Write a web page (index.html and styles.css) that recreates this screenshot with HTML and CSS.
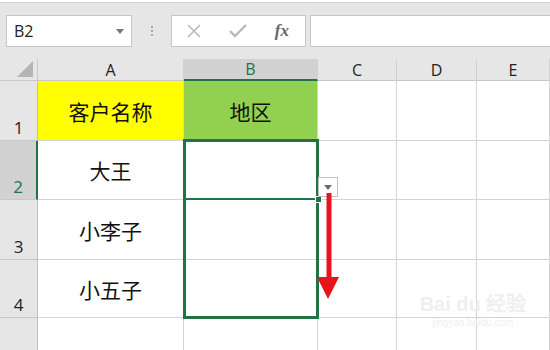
FILE: index.html
```html
<!DOCTYPE html>
<html lang="zh-CN">
<head>
  <meta charset="UTF-8" />
  <title>Excel 下拉填充</title>
  <link rel="stylesheet" href="styles.css">
</head>
<body>
  <div class="app">
    <div class="toolbar">
      <div class="namebox">
        <span>B2</span>
        <svg class="caret" width="8" height="5" viewBox="0 0 8 5"><path d="M0 0h8L4 5z" fill="#777"/></svg>
      </div>
      <div class="grip"><i></i><i></i><i></i></div>
      <div class="fbuttons">
        <svg width="16" height="16" viewBox="0 0 16 16"><path d="M2 2l12 12M14 2L2 14" stroke="#b9b9b9" stroke-width="1.6"/></svg>
        <svg width="18" height="16" viewBox="0 0 18 16"><path d="M1 8l5 5L17 2" stroke="#b9b9b9" stroke-width="2.4" fill="none"/></svg>
        <span class="fx">fx</span>
      </div>
      <div class="formula"></div>
    </div>

    <div class="sheet">
      <div class="corner"><svg width="16" height="16" viewBox="0 0 16 16"><path d="M16 0V16H0z" fill="#b4b4b4"/></svg></div>
      <div class="colhead">A</div>
      <div class="colhead active">B</div>
      <div class="colhead">C</div>
      <div class="colhead">D</div>
      <div class="colhead">E</div>

      <div class="rowhead">1</div>
      <div class="cell yellow">客户名称</div>
      <div class="cell green">地区</div>
      <div class="cell"></div>
      <div class="cell"></div>
      <div class="cell"></div>

      <div class="rowhead active">2</div>
      <div class="cell">大王</div>
      <div class="cell"></div>
      <div class="cell"></div>
      <div class="cell"></div>
      <div class="cell"></div>

      <div class="rowhead">3</div>
      <div class="cell">小李子</div>
      <div class="cell"></div>
      <div class="cell"></div>
      <div class="cell"></div>
      <div class="cell"></div>

      <div class="rowhead">4</div>
      <div class="cell">小五子</div>
      <div class="cell"></div>
      <div class="cell"></div>
      <div class="cell"></div>
      <div class="cell"></div>

      <div class="rowhead"></div>
      <div class="cell"></div>
      <div class="cell"></div>
      <div class="cell"></div>
      <div class="cell"></div>
      <div class="cell"></div>

      <div class="selection"></div>
      <div class="divider"></div>
      <div class="handle"></div>
      <div class="dropbtn"><svg width="8" height="5" viewBox="0 0 8 5"><path d="M0 0h8L4 5z" fill="#6d6d6d"/></svg></div>
      <svg class="arrow" width="24" height="110" viewBox="0 0 24 110"><path d="M10.5 0h5v84h-5z" fill="#e8141b"/><path d="M1 84h22l-11 22z" fill="#e8141b"/></svg>
      <div class="watermark">
        <div class="wm-logo">Bai du 经验</div>
        <div class="wm-url">jingyan.baidu.com</div>
      </div>
    </div>
  </div>
</body>
</html>
```

FILE: styles.css
```css
body {
  margin: 0;
  font-family: "Open Sans", "Noto Sans", "Liberation Sans", sans-serif;
  background-color: #ffffff;
  overflow: hidden;
}

.app {
  width: 550px;
  height: 350px;
  overflow: hidden;
}

.toolbar {
  height: 57px;
  box-sizing: border-box;
  background-color: #e6e6e6;
  border-top: 1px solid #d2d2d2;
  margin-top: 2px;
  display: flex;
  align-items: flex-start;
  padding: 12px 0 0 6px;
}

.namebox {
  width: 126px;
  height: 32px;
  box-sizing: border-box;
  background-color: #fff;
  border: 1px solid #c6c6c6;
  display: flex;
  align-items: center;
  justify-content: space-between;
  padding: 0 7px 0 7px;
  font-size: 16px;
  color: #222;
}

.grip {
  width: 39px;
  height: 32px;
  display: flex;
  flex-direction: column;
  align-items: center;
  justify-content: center;
  gap: 2px;
}

.grip i {
  width: 2px;
  height: 2px;
  background-color: #a8a8a8;
}

.fbuttons {
  width: 135px;
  height: 32px;
  box-sizing: border-box;
  background-color: #fff;
  border: 1px solid #c6c6c6;
  display: flex;
  align-items: center;
  justify-content: space-between;
  padding: 0 16px 0 14px;
}

.fx {
  font-family: "Liberation Serif", serif;
  font-style: italic;
  font-weight: bold;
  font-size: 17px;
  color: #666;
}

.formula {
  flex: 1;
  height: 32px;
  box-sizing: border-box;
  margin-left: 4px;
  background-color: #fff;
  border: 1px solid #c6c6c6;
  border-right: none;
}

.sheet {
  position: relative;
  display: grid;
  grid-template-columns: 38px 146px 134px 79px 80px 1fr;
  grid-template-rows: 22px 60px 59px 60px 58px 40px;
  font-family: "Noto Sans CJK SC", "Noto Sans", sans-serif;
}

.corner,
.colhead,
.rowhead {
  background-color: #e6e6e6;
  box-sizing: border-box;
  border-right: 1px solid #c8c8c8;
  border-bottom: 1px solid #c8c8c8;
  color: #222;
  font-family: "Open Sans", "Noto Sans", sans-serif;
  font-size: 16px;
}

.corner {
  display: flex;
  align-items: flex-end;
  justify-content: flex-end;
  padding: 0 4px 3px 0;
}

.colhead {
  display: flex;
  align-items: center;
  justify-content: center;
  border-right-color: #d0d0d0;
}

.colhead.active {
  background-color: #d2d2d2;
  color: #217346;
  border-bottom: 2px solid #217346;
}

.rowhead {
  display: flex;
  align-items: flex-end;
  justify-content: center;
  padding-bottom: 1px;
  border-right-color: #c0c0c0;
  font-size: 17px;
}

.rowhead.active {
  background-color: #d2d2d2;
  color: #217346;
  border-right: 2px solid #217346;
}

.cell {
  box-sizing: border-box;
  border-right: 1px solid #d4d4d4;
  border-bottom: 1px solid #d4d4d4;
  display: flex;
  align-items: center;
  justify-content: center;
  font-size: 21px;
  color: #111;
}

.yellow {
  background-color: #ffff00;
}

.green {
  background-color: #92d050;
}

.selection {
  position: absolute;
  left: 183px;
  top: 80px;
  width: 136px;
  height: 180px;
  box-sizing: border-box;
  border: 3px solid #217346;
}

.divider {
  position: absolute;
  left: 183px;
  top: 139px;
  width: 136px;
  height: 2px;
  background-color: #217346;
}

.handle {
  position: absolute;
  left: 315px;
  top: 137px;
  width: 5px;
  height: 5px;
  background-color: #217346;
  border: 1px solid #fff;
}

.dropbtn {
  position: absolute;
  left: 318px;
  top: 118px;
  width: 20px;
  height: 20px;
  box-sizing: border-box;
  background-color: #fff;
  border: 1px solid #c0c0c0;
  display: flex;
  align-items: center;
  justify-content: center;
}

.arrow {
  position: absolute;
  left: 316px;
  top: 134px;
}

.watermark {
  position: absolute;
  left: 418px;
  top: 233px;
  width: 110px;
  color: #efefef;
  text-align: center;
  font-family: "Liberation Sans", sans-serif;
}

.wm-logo {
  font-size: 20px;
  font-weight: bold;
  line-height: 24px;
}

.wm-url {
  font-size: 10px;
  line-height: 14px;
}
```
